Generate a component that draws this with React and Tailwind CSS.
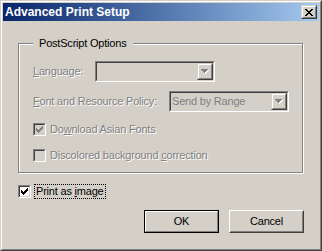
import React from 'react';

// pixel glyphs (classic 3D dialog look)
const CHECK = 'M6 0h1v1h-1zM5 1h2v1h-2zM0 2h1v1h-1zM4 2h3v1h-3zM0 3h2v1h-2zM3 3h3v1h-3zM0 4h5v1h-5zM1 5h3v1h-3zM2 6h1v1h-1z';
const ARROW = 'M0 0h7v1h-7zM1 1h5v1h-5zM2 2h3v1h-3zM3 3h1v1h-1z';
const CLOSE = 'M0 0h2v1h-2zM6 0h2v1h-2zM1 1h2v1h-2zM5 1h2v1h-2zM2 2h4v1h-4zM3 3h2v1h-2zM2 4h4v1h-4zM1 5h2v1h-2zM5 5h2v1h-2zM0 6h2v1h-2zM6 6h2v1h-2z';

const disabledText = 'text-[#808080] [text-shadow:1px_1px_0_#fff]';

const Checkbox = ({ checked, disabled }) => (
  <div className="w-[13px] h-[13px] shrink-0 border border-t-[#808080] border-l-[#808080] border-r-white border-b-white">
    <div
      className={`w-full h-full p-px border border-t-[#404040] border-l-[#404040] border-r-[#d4d0c8] border-b-[#d4d0c8] ${
        disabled ? 'bg-[#d4d0c8]' : 'bg-white'
      }`}
    >
      {checked && (
        <svg width="7" height="7" viewBox="0 0 7 7" shapeRendering="crispEdges" className="block">
          <path d={CHECK} fill={disabled ? '#808080' : '#000'} />
        </svg>
      )}
    </div>
  </div>
);

const DropButton = () => (
  <div className="w-[16px] h-full shrink-0 border border-t-[#d4d0c8] border-l-[#d4d0c8] border-r-[#404040] border-b-[#404040]">
    <div className="h-full flex items-center justify-center border border-t-white border-l-white border-r-[#808080] border-b-[#808080] bg-[#d4d0c8]">
      <svg width="8" height="5" viewBox="0 0 8 5" shapeRendering="crispEdges" className="block">
        <path d={ARROW} fill="#fff" transform="translate(1 1)" />
        <path d={ARROW} fill="#808080" />
      </svg>
    </div>
  </div>
);

const Combo = ({ value }) => (
  <div className="w-[120px] h-[21px] shrink-0 border border-t-[#808080] border-l-[#808080] border-r-white border-b-white">
    <div className="h-full flex border border-t-[#404040] border-l-[#404040] border-r-[#d4d0c8] border-b-[#d4d0c8] bg-[#d4d0c8]">
      <div className="flex-1 pl-px leading-[17px] text-[#808080] whitespace-nowrap overflow-hidden">{value}</div>
      <DropButton />
    </div>
  </div>
);

const Button = ({ children, isDefault }) =>
  isDefault ? (
    <div className="w-[75px] h-[23px] border border-black">
      <div className="h-full flex items-center justify-center border border-t-white border-l-white border-r-[#808080] border-b-[#808080]">
        {children}
      </div>
    </div>
  ) : (
    <div className="w-[75px] h-[23px] border border-t-white border-l-white border-r-[#404040] border-b-[#404040]">
      <div className="h-full flex items-center justify-center border border-t-[#d4d0c8] border-l-[#d4d0c8] border-r-[#808080] border-b-[#808080]">
        {children}
      </div>
    </div>
  );

export default function App() {
  return (
    <div className="w-[322px] h-[251px] bg-[#d4d0c8] border border-t-[#d4d0c8] border-l-[#d4d0c8] border-r-[#404040] border-b-[#404040] font-['Liberation_Sans',Arial,sans-serif] text-[11px] tracking-[-0.2px] text-black">
      <div className="h-full border border-t-white border-l-white border-r-[#808080] border-b-[#808080] p-px flex flex-col">
        {/* Title bar */}
        <div className="h-[18px] shrink-0 flex items-center justify-between pl-[2px] pr-[2px] bg-linear-to-r from-[#0a246a] to-[#a6caf0]">
          <span className="text-white font-bold text-[12px] tracking-normal leading-[18px]">Advanced Print Setup</span>
          <div className="w-[16px] h-[14px] border border-t-[#d4d0c8] border-l-[#d4d0c8] border-r-[#404040] border-b-[#404040]">
            <div className="h-full flex items-center justify-center border border-t-white border-l-white border-r-[#808080] border-b-[#808080] bg-[#d4d0c8]">
              <svg width="8" height="7" viewBox="0 0 8 7" shapeRendering="crispEdges" className="block">
                <path d={CLOSE} fill="#000" />
              </svg>
            </div>
          </div>
        </div>

        {/* PostScript Options group */}
        <div className="relative mt-[22px] ml-[15px] w-[285px] h-[130px] border border-[#808080] shadow-[inset_1px_1px_0_#fff,1px_1px_0_#fff]">
          <span className="absolute top-[-7px] left-[14px] px-[6px] bg-[#d4d0c8] leading-[13px] text-black">
            PostScript Options
          </span>

          <div className="flex items-center h-[21px] mt-[17px] pl-[14px]">
            <span className={`w-[62px] ${disabledText}`}>
              <span className="underline">L</span>anguage:
            </span>
            <Combo value="" />
          </div>

          <div className="flex items-center h-[21px] mt-[9px] pl-[14px]">
            <span className={`w-[136px] whitespace-nowrap ${disabledText}`}>
              <span className="underline">F</span>ont and Resource Policy:
            </span>
            <Combo value="Send by Range" />
          </div>

          <div className="flex items-center h-[13px] mt-[11px] pl-[14px]">
            <Checkbox checked disabled />
            <span className={`ml-[4px] whitespace-nowrap ${disabledText}`}>
              Do<span className="underline">w</span>nload Asian Fonts
            </span>
          </div>

          <div className="flex items-center h-[13px] mt-[13px] pl-[14px]">
            <Checkbox disabled />
            <span className={`ml-[4px] whitespace-nowrap ${disabledText}`}>
              Discolored background <span className="underline">c</span>orrection
            </span>
          </div>
        </div>

        {/* Print as image */}
        <div className="flex items-center mt-[11px] ml-[15px]">
          <Checkbox checked />
          <span className="ml-[3px] h-[15px] px-px border border-dotted border-black leading-[13px] whitespace-nowrap">
            Print as <span className="underline">i</span>mage
          </span>
        </div>

        {/* Buttons */}
        <div className="flex justify-end gap-[10px] mt-[11px] pr-[15px]">
          <Button isDefault>OK</Button>
          <Button>Cancel</Button>
        </div>
      </div>
    </div>
  );
}
